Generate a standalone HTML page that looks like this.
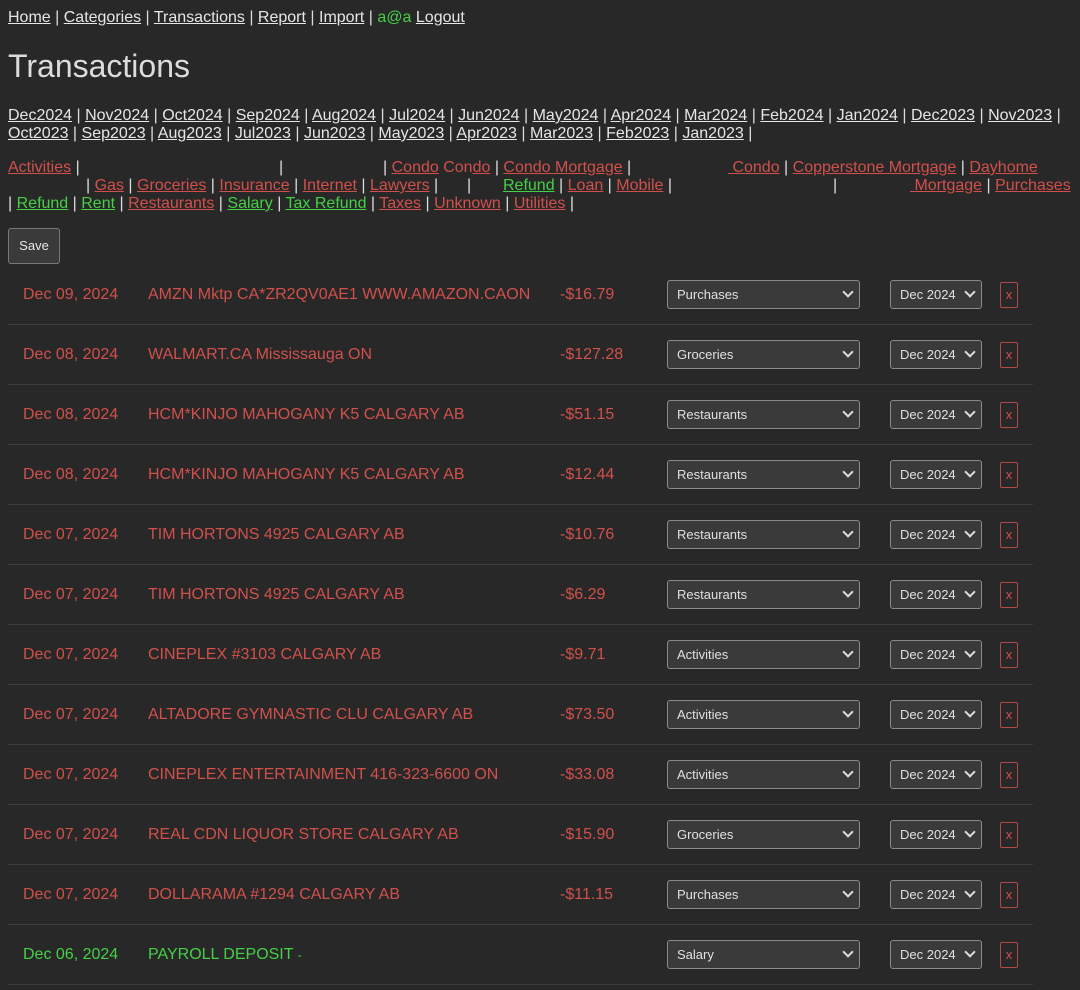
<!DOCTYPE html>
<html><head><meta charset="utf-8"><style>
body{margin:0;background:#282828;color:#ddd;font-family:"Liberation Sans",sans-serif;font-size:16px;width:1080px;height:990px;overflow:hidden;position:relative}
a{color:#e6e6e6;text-decoration:underline}
.r{color:#d1504b}.g{color:#45d045}
.ab{position:absolute;white-space:nowrap;line-height:18px}
h1{position:absolute;left:8px;top:46px;margin:0;font-weight:normal;font-size:32px;color:#dcdcdc;line-height:40px}
.row{position:absolute;left:8px;width:1025px;height:60px;border-bottom:1px solid #3c3c3c}
.row span{position:absolute;top:21px;line-height:20px}
.sel{position:absolute;top:16px;border:1px solid #8a8a8a;border-radius:3px;background:#3a3a3a;color:#e0e0e0;font-size:13px;line-height:27px;padding-left:9px;box-sizing:border-box;height:29px}
.sel i{position:absolute;right:7px;top:7px;width:6px;height:6px;border-right:2px solid #ddd;border-bottom:2px solid #ddd;transform:rotate(45deg)}
.x{position:absolute;left:992px;top:18px;width:18px;height:26px;box-sizing:border-box;border:1px solid #b04a46;border-radius:2px;color:#d1504b;font-size:13px;text-align:center;line-height:24px}
</style></head><body>
<div class="ab" style="left:8px;top:9px"><a>Home</a> | <a>Categories</a> | <a>Transactions</a> | <a>Report</a> | <a>Import</a> | <span class="g">a@a</span> <a>Logout</a></div>
<h1>Transactions</h1>
<div class="ab" style="left:8px;top:107px"><a>Dec2024</a> | <a>Nov2024</a> | <a>Oct2024</a> | <a>Sep2024</a> | <a>Aug2024</a> | <a>Jul2024</a> | <a>Jun2024</a> | <a>May2024</a> | <a>Apr2024</a> | <a>Mar2024</a> | <a>Feb2024</a> | <a>Jan2024</a> | <a>Dec2023</a> | <a>Nov2023</a> |</div>
<div class="ab" style="left:8px;top:125px"><a>Oct2023</a> | <a>Sep2023</a> | <a>Aug2023</a> | <a>Jul2023</a> | <a>Jun2023</a> | <a>May2023</a> | <a>Apr2023</a> | <a>Mar2023</a> | <a>Feb2023</a> | <a>Jan2023</a> |</div>

<div class="ab" style="left:8px;top:159px"><a class="r">Activities</a> |</div>
<div class="ab" style="left:279px;top:159px">|</div>
<div class="ab" style="left:383px;top:159px">| <a class="r">Condo</a> <span class="r">Con</span><a class="r">do</a> | <a class="r">Condo Mortgage</a> |</div>
<div class="ab" style="left:728px;top:159px"><a class="r">&nbsp;Condo</a> | <a class="r">Copperstone Mortgage</a> | <a class="r">Dayhome</a></div>
<div class="ab" style="left:86px;top:177px">| <a class="r">Gas</a> | <a class="r">Groceries</a> | <a class="r">Insurance</a> | <a class="r">Internet</a> | <a class="r">Lawyers</a> |</div>
<div class="ab" style="left:467px;top:177px">|</div>
<div class="ab" style="left:503px;top:177px"><a class="g">Refund</a> | <a class="r">Loan</a> | <a class="r">Mobile</a> |</div>
<div class="ab" style="left:833px;top:177px">|</div>
<div class="ab" style="left:910px;top:177px"><a class="r">&nbsp;Mortgage</a> | <a class="r">Purchases</a></div>
<div class="ab" style="left:8px;top:195px">| <a class="g">Refund</a> | <a class="g">Rent</a> | <a class="r">Restaurants</a> | <a class="g">Salary</a> | <a class="g">Tax Refund</a> | <a class="r">Taxes</a> | <a class="r">Unknown</a> | <a class="r">Utilities</a> |</div>

<div style="position:absolute;left:8px;top:228px;width:52px;height:36px;box-sizing:border-box;border:1px solid #777;border-radius:3px;background:#3a3a3a;color:#e6e6e6;font-size:13px;text-align:center;line-height:34px">Save</div>

<div class="row" style="top:264px"><span class="r" style="left:15px">Dec 09, 2024</span><span class="r" style="left:140px">AMZN Mktp CA*ZR2QV0AE1 WWW.AMAZON.CAON</span><span class="r" style="left:552px">-$16.79</span><div class="sel" style="left:659px;width:193px">Purchases<i></i></div><div class="sel" style="left:882px;width:92px">Dec 2024<i></i></div><div class="x">x</div></div>
<div class="row" style="top:324px"><span class="r" style="left:15px">Dec 08, 2024</span><span class="r" style="left:140px">WALMART.CA Mississauga ON</span><span class="r" style="left:552px">-$127.28</span><div class="sel" style="left:659px;width:193px">Groceries<i></i></div><div class="sel" style="left:882px;width:92px">Dec 2024<i></i></div><div class="x">x</div></div>
<div class="row" style="top:384px"><span class="r" style="left:15px">Dec 08, 2024</span><span class="r" style="left:140px">HCM*KINJO MAHOGANY K5 CALGARY AB</span><span class="r" style="left:552px">-$51.15</span><div class="sel" style="left:659px;width:193px">Restaurants<i></i></div><div class="sel" style="left:882px;width:92px">Dec 2024<i></i></div><div class="x">x</div></div>
<div class="row" style="top:444px"><span class="r" style="left:15px">Dec 08, 2024</span><span class="r" style="left:140px">HCM*KINJO MAHOGANY K5 CALGARY AB</span><span class="r" style="left:552px">-$12.44</span><div class="sel" style="left:659px;width:193px">Restaurants<i></i></div><div class="sel" style="left:882px;width:92px">Dec 2024<i></i></div><div class="x">x</div></div>
<div class="row" style="top:504px"><span class="r" style="left:15px">Dec 07, 2024</span><span class="r" style="left:140px">TIM HORTONS 4925 CALGARY AB</span><span class="r" style="left:552px">-$10.76</span><div class="sel" style="left:659px;width:193px">Restaurants<i></i></div><div class="sel" style="left:882px;width:92px">Dec 2024<i></i></div><div class="x">x</div></div>
<div class="row" style="top:564px"><span class="r" style="left:15px">Dec 07, 2024</span><span class="r" style="left:140px">TIM HORTONS 4925 CALGARY AB</span><span class="r" style="left:552px">-$6.29</span><div class="sel" style="left:659px;width:193px">Restaurants<i></i></div><div class="sel" style="left:882px;width:92px">Dec 2024<i></i></div><div class="x">x</div></div>
<div class="row" style="top:624px"><span class="r" style="left:15px">Dec 07, 2024</span><span class="r" style="left:140px">CINEPLEX #3103 CALGARY AB</span><span class="r" style="left:552px">-$9.71</span><div class="sel" style="left:659px;width:193px">Activities<i></i></div><div class="sel" style="left:882px;width:92px">Dec 2024<i></i></div><div class="x">x</div></div>
<div class="row" style="top:684px"><span class="r" style="left:15px">Dec 07, 2024</span><span class="r" style="left:140px">ALTADORE GYMNASTIC CLU CALGARY AB</span><span class="r" style="left:552px">-$73.50</span><div class="sel" style="left:659px;width:193px">Activities<i></i></div><div class="sel" style="left:882px;width:92px">Dec 2024<i></i></div><div class="x">x</div></div>
<div class="row" style="top:744px"><span class="r" style="left:15px">Dec 07, 2024</span><span class="r" style="left:140px">CINEPLEX ENTERTAINMENT 416-323-6600 ON</span><span class="r" style="left:552px">-$33.08</span><div class="sel" style="left:659px;width:193px">Activities<i></i></div><div class="sel" style="left:882px;width:92px">Dec 2024<i></i></div><div class="x">x</div></div>
<div class="row" style="top:804px"><span class="r" style="left:15px">Dec 07, 2024</span><span class="r" style="left:140px">REAL CDN LIQUOR STORE CALGARY AB</span><span class="r" style="left:552px">-$15.90</span><div class="sel" style="left:659px;width:193px">Groceries<i></i></div><div class="sel" style="left:882px;width:92px">Dec 2024<i></i></div><div class="x">x</div></div>
<div class="row" style="top:864px"><span class="r" style="left:15px">Dec 07, 2024</span><span class="r" style="left:140px">DOLLARAMA #1294 CALGARY AB</span><span class="r" style="left:552px">-$11.15</span><div class="sel" style="left:659px;width:193px">Purchases<i></i></div><div class="sel" style="left:882px;width:92px">Dec 2024<i></i></div><div class="x">x</div></div>
<div class="row" style="top:924px"><span class="g" style="left:15px">Dec 06, 2024</span><span class="g" style="left:140px">PAYROLL DEPOSIT <small style="font-size:12px">-</small></span><div class="sel" style="left:659px;width:193px">Salary<i></i></div><div class="sel" style="left:882px;width:92px">Dec 2024<i></i></div><div class="x">x</div></div>
</body></html>
